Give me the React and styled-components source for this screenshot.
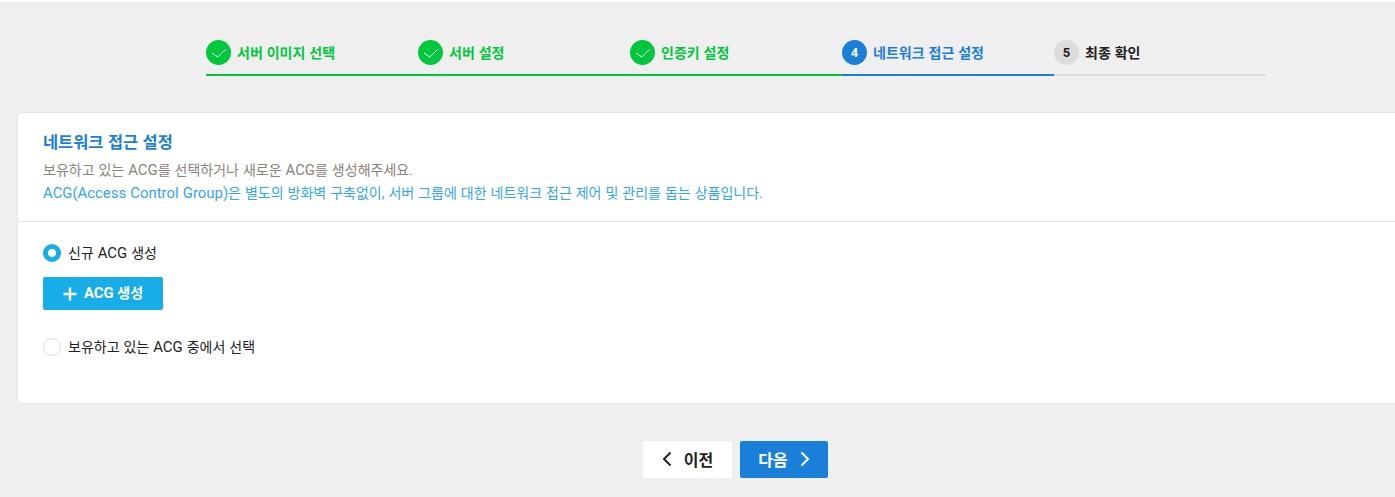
import React from 'react';
import styled, { createGlobalStyle } from 'styled-components';

const GlobalStyle = createGlobalStyle`
    * {
        box-sizing: border-box;
    }
    html, body {
        margin: 0;
        height: 100%;
        overflow: hidden;
        background: #efefef;
        font-family: Roboto, "Noto Sans CJK KR", sans-serif;
        word-spacing: 0.5px;
    }
`;

const steps = [
    { label: '서버 이미지 선택', state: 'done' },
    { label: '서버 설정', state: 'done' },
    { label: '인증키 설정', state: 'done' },
    { label: '네트워크 접근 설정', state: 'active', num: 4 },
    { label: '최종 확인', state: 'todo', num: 5 }
];

const stepColor = {
    done: '#00c73c',
    active: '#1a7fd9',
    todo: '#dcdcdc'
};

const Check = () => (
    <svg width="16" height="16" viewBox="0 0 16 16" fill="none">
        <path d="M1 8 L6.8 12 L15 4" stroke="#fff" strokeWidth="1" />
    </svg>
);

const Chevron = ({ dir }) => (
    <svg width="10" height="16" viewBox="0 0 10 16" fill="none">
        <path
            d={dir === 'left' ? 'M8.5 1.5 L2 8 L8.5 14.5' : 'M1.5 1.5 L8 8 L1.5 14.5'}
            stroke="currentColor"
            strokeWidth="2"
        />
    </svg>
);

const App = () => {
    return (
        <Page>
            <GlobalStyle />
            <Stepper>
                {steps.map(step => (
                    <Step key={step.label} $state={step.state}>
                        <StepCircle $state={step.state}>
                            {step.state === 'done' ? <Check /> : step.num}
                        </StepCircle>
                        <StepLabel $state={step.state}>{step.label}</StepLabel>
                    </Step>
                ))}
            </Stepper>
            <Content>
                <Card>
                    <CardHead>
                        <CardTitle>네트워크 접근 설정</CardTitle>
                        <CardDesc>보유하고 있는 <Latin>ACG</Latin>를 선택하거나 새로운 <Latin>ACG</Latin>를 생성해주세요.</CardDesc>
                        <CardNote><Latin>ACG(Access Control Group)</Latin>은 별도의 방화벽 구축없이, 서버 그룹에 대한 네트워크 접근 제어 및 관리를 돕는 상품입니다.</CardNote>
                    </CardHead>
                    <CardBody>
                        <RadioRow>
                            <Radio $checked />
                            <RadioLabel>신규 <Latin>ACG</Latin> 생성</RadioLabel>
                        </RadioRow>
                        <CreateButton>
                            <svg width="14" height="14" viewBox="0 0 14 14" fill="none">
                                <path d="M7 0.5 V13.5 M0.5 7 H13.5" stroke="#fff" strokeWidth="2.4" />
                            </svg>
                            <ButtonText><Latin>ACG</Latin> 생성</ButtonText>
                        </CreateButton>
                        <RadioRow>
                            <Radio />
                            <RadioLabel>보유하고 있는 <Latin>ACG</Latin> 중에서 선택</RadioLabel>
                        </RadioRow>
                    </CardBody>
                </Card>
                <Footer>
                    <NavButton>
                        <Chevron dir="left" />
                        이전
                    </NavButton>
                    <NavButton $primary>
                        다음
                        <Chevron dir="right" />
                    </NavButton>
                </Footer>
            </Content>
        </Page>
    );
};

const Page = styled.div`
    width: 1395px;
    height: 497px;
    padding-top: 38px;
    overflow: hidden;
    background: #efefef;
    border-top: 2px solid #fff;
`;

const Stepper = styled.div`
    display: grid;
    grid-template-columns: repeat(5, 212px);
    width: 1060px;
    margin-left: 206px;
`;

const Step = styled.div`
    display: flex;
    align-items: flex-start;
    gap: 6px;
    height: 36px;
    border-bottom: 2px solid ${props => stepColor[props.$state]};
`;

const StepCircle = styled.span`
    display: flex;
    align-items: center;
    justify-content: center;
    width: 25px;
    height: 25px;
    border-radius: 50%;
    font-size: 13px;
    font-weight: 700;
    background: ${props => stepColor[props.$state]};
    color: ${props => (props.$state === 'todo' ? '#222' : '#fff')};
`;

const StepLabel = styled.span`
    font-size: 14px;
    font-weight: 700;
    line-height: 26px;
    color: ${props => (props.$state === 'todo' ? '#222' : stepColor[props.$state])};
`;

const Content = styled.div`
    width: 1437px;
    margin: 36px 0 0 17px;
`;

const Card = styled.section`
    height: 292px;
    background: #fff;
    border: 1px solid #e6e6e6;
    border-radius: 4px;
`;

const CardHead = styled.div`
    height: 109px;
    padding: 18px 25px 0;
    border-bottom: 1px solid #e2e2e2;
`;

const CardTitle = styled.h2`
    margin: 0 0 4px;
    font-size: 16.4px;
    font-weight: 700;
    line-height: 24px;
    color: #1a7fd9;
`;

const CardDesc = styled.p`
    margin: 0;
    font-size: 14px;
    line-height: 23px;
    color: #8c8279;
`;

const CardNote = styled(CardDesc)`
    color: #2fa6ee;
`;

const Latin = styled.span`
    font-size: 14.9px;
`;

const CardBody = styled.div`
    padding: 21px 25px 0;
`;

const RadioRow = styled.label`
    display: flex;
    align-items: center;
    gap: 7px;
    height: 20px;
`;

const Radio = styled.span`
    width: 18px;
    height: 18px;
    border-radius: 50%;
    background: #fff;
    border: ${props => (props.$checked ? '5px solid #17ade9' : '1px solid #dfdfdf')};
`;

const RadioLabel = styled.span`
    font-size: 14px;
    line-height: 18px;
    color: #222;
`;

const CreateButton = styled.button`
    display: flex;
    align-items: center;
    justify-content: center;
    gap: 7px;
    width: 120px;
    height: 33px;
    margin: 14px 0 27px;
    padding: 0;
    border: 0;
    border-radius: 2px;
    background: #17ade9;
    color: #fff;
    font-family: inherit;
    font-size: 14px;
    font-weight: 700;
`;

const ButtonText = styled.span`
    margin-bottom: 3px;
`;

const Footer = styled.div`
    display: flex;
    justify-content: center;
    gap: 8px;
    margin-top: 37px;
`;

const NavButton = styled.button`
    display: flex;
    align-items: center;
    justify-content: center;
    gap: 12px;
    width: ${props => (props.$primary ? '88px' : '89px')};
    height: 37px;
    padding: 0 0 1px;
    border: 0;
    border-radius: 2px;
    background: ${props => (props.$primary ? '#1a7fd9' : '#fff')};
    color: ${props => (props.$primary ? '#fff' : '#222')};
    font-family: inherit;
    font-size: 16px;
    font-weight: 700;
`;

export default App;
